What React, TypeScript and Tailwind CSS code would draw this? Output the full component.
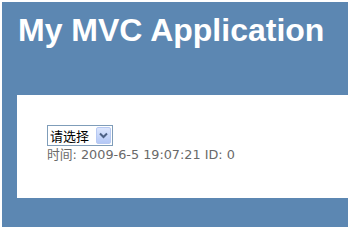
export default function App() {
    return (
        <div className="w-[350px] h-[229px] bg-white pt-[2px] pl-[2px] pr-[2px] pb-[2px] overflow-hidden">
            <div className="w-full h-full bg-[#5c87b2] overflow-hidden">
                <div className="pl-[16px] pt-[10px] h-[93px]">
                    <h1 className="text-white font-bold text-[32px] leading-[37px] font-['Liberation_Sans',Arial,sans-serif]">
                        My MVC Application
                    </h1>
                </div>
                <div className="ml-[15px] bg-white h-[103px] pl-[30px] pt-[30px] font-['DejaVu_Sans','Noto_Sans_CJK_SC',sans-serif] text-[12.8px] text-[#696969]">
                    <div className="flex items-center w-[66px] h-[21px] border border-[#7f9db9] bg-white">
                        <span className="flex-1 pl-[2px] text-[13px] leading-[17px] text-black font-['Noto_Sans_CJK_SC',sans-serif]">请选择</span>
                        <span className="w-[15px] h-[17px] mr-[1px] flex items-center justify-center rounded-[2px] bg-gradient-to-b from-[#dce6fd] to-[#b4c8f6] border border-[#b7c9f2]">
                            <svg width="9" height="7" viewBox="0 0 9 7">
                                <path d="M1 1.5 L4.5 5 L8 1.5" fill="none" stroke="#4d6185" strokeWidth="2" />
                            </svg>
                        </span>
                    </div>
                    <div className="leading-[15px] mt-[1px]">
                        时间: 2009-6-5 19:07:21 ID: 0
                    </div>
                </div>
            </div>
        </div>
    );
}
